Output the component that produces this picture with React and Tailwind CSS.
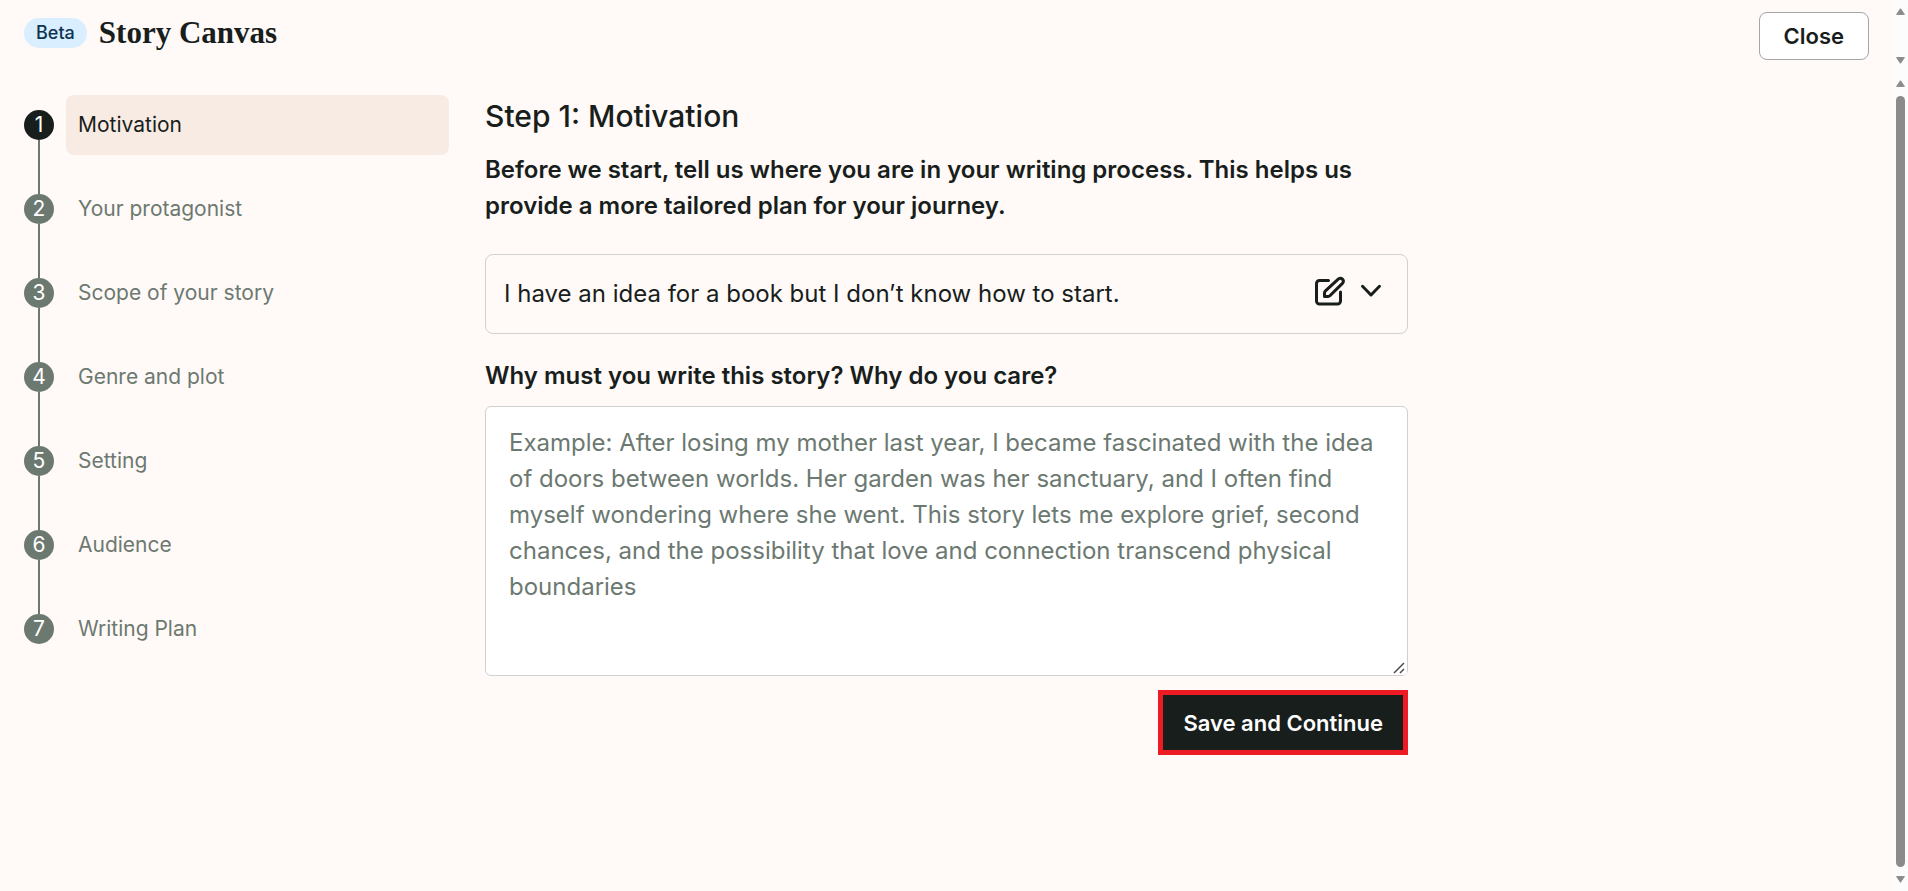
import { useState } from "react"

const STEPS = [
  "Motivation",
  "Your protagonist",
  "Scope of your story",
  "Genre and plot",
  "Setting",
  "Audience",
  "Writing Plan",
]

const STAGES = [
  "I have an idea for a book but I don’t know how to start.",
]

const PLACEHOLDER =
  "Example: After losing my mother last year, I became fascinated with the idea of doors between worlds. Her garden was her sanctuary, and I often find myself wondering where she went. This story lets me explore grief, second chances, and the possibility that love and connection transcend physical boundaries"

function Arrow({ down }) {
  return (
    <svg viewBox="0 0 9 7" className={down ? "w-[9px] h-[7px] rotate-180" : "w-[9px] h-[7px]"} fill="#8b8b8b" stroke="#8b8b8b" strokeWidth="1" strokeLinejoin="round" aria-hidden="true">
      <path d="M4.5 0.7 8.4 6.4H0.6Z" />
    </svg>
  )
}

function ScrollTrack({ thumb }) {
  return (
    <div className="w-[15px] shrink-0 bg-[#fcfcfc] flex flex-col items-center justify-between gap-[9px] py-2" aria-hidden="true">
      <Arrow />
      {thumb && <div className="w-[9px] flex-1 rounded-full bg-[#8b8b8b]" />}
      <Arrow down />
    </div>
  )
}

function EditIcon() {
  return (
    <svg viewBox="0 0 34 34" className="size-[34px]" fill="none" stroke="#181e1c" strokeWidth="3" strokeLinecap="round" strokeLinejoin="round" aria-hidden="true">
      <path d="M15.5 7.5h-9a3 3 0 0 0-3 3V28a3 3 0 0 0 3 3h18a3 3 0 0 0 3-3v-9" />
      <path d="M25.5 5.9a3 3 0 0 1 4.2 4.2L16.9 22.8a2.5 2.5 0 0 1-1.8.7H11.5V20a2.5 2.5 0 0 1 .7-1.8z" />
    </svg>
  )
}

function ChevronIcon() {
  return (
    <svg viewBox="0 0 24 24" className="size-6" fill="none" stroke="#181e1c" strokeWidth="3" strokeLinecap="round" strokeLinejoin="round" aria-hidden="true">
      <path d="M3.5 8.3l8.500 8.700 8.500-8.700" />
    </svg>
  )
}

// Larger grip drawn over the browser's own resize corner
function ResizeGrip() {
  return (
    <svg viewBox="0 0 15 15" className="absolute right-px bottom-px size-[15px] pointer-events-none" aria-hidden="true">
      <path d="M0 0H15V11A4 4 0 0 1 11 15H0Z" fill="#fff" />
      <path d="M2 13 12 3M8 13 12 9" stroke="#4c4c4c" strokeWidth="1.5" fill="none" />
    </svg>
  )
}

export default function StoryCanvas() {
  const [current, setCurrent] = useState(0)
  const [stage, setStage]     = useState(STAGES[0])
  const [reason, setReason]   = useState("")

  return (
    <div className="min-h-screen flex flex-col bg-[#fff9f7] text-[#181e1c] font-['Inter',sans-serif]">

      {/* Top bar */}
      <div className="flex">
        <header className="flex-1 flex items-start justify-between px-6 py-3">
          <div className="flex items-center gap-3 h-[42px]">
            <span className="bg-[#d9eefe] text-[#0c3450] text-lg leading-[30px] font-medium rounded-full px-3">Beta</span>
            <h1 className="font-['Liberation_Serif',serif] font-bold text-[31px] leading-10">Story Canvas</h1>
          </div>
          <button className="bg-white border border-[#a3a6a5] rounded-lg h-12 px-6 text-[22px] font-semibold">Close</button>
        </header>
        <ScrollTrack />
      </div>

      <div className="flex-1 flex">
        <div className="flex-1 flex gap-9 px-6 pt-[23px]">

          {/* Steps */}
          <nav className="w-[425px] shrink-0">
            <ol className="flex flex-col gap-6">
              {STEPS.map((step, i) => (
                <li key={step} className="relative">
                  {i < STEPS.length - 1 && <span className="absolute left-[14px] top-[45px] h-[54px] w-0.5 bg-[#6c7971]" />}
                  <button onClick={() => setCurrent(i)} className="w-full flex items-center gap-3 text-left text-[21px]">
                    <span className={`size-[30px] shrink-0 rounded-full text-white flex items-center justify-center ${i === current ? "bg-[#181e1c]" : "bg-[#6c7971]"}`}>
                      {i + 1}
                    </span>
                    <span className={`flex-1 h-[60px] flex items-center px-3 rounded-lg ${i === current ? "bg-[#f8ebe3]" : "text-[#6c7971]"}`}>
                      {step}
                    </span>
                  </button>
                </li>
              ))}
            </ol>
          </nav>

          {/* Current step */}
          <main className="flex-1 max-w-[923px] text-2xl leading-9">
            <h2 className="text-[30px] leading-[43px] font-medium">Step 1: Motivation</h2>
            <label htmlFor="stage" className="block mt-[14px] font-semibold">
              Before we start, tell us where you are in your writing process. This helps us provide a more tailored plan for your journey.
            </label>
            <div className="relative mt-[30px]">
              <select
                id="stage"
                value={stage}
                onChange={e => setStage(e.target.value)}
                className="block w-full h-20 appearance-none bg-transparent border border-[#cfd2d1] rounded-lg pl-[18px] pr-28"
              >
                {STAGES.map(s => <option key={s} value={s}>{s}</option>)}
              </select>
              <div className="absolute inset-y-0 right-[25px] pb-2 flex items-center gap-3 pointer-events-none">
                <EditIcon />
                <ChevronIcon />
              </div>
            </div>

            <label htmlFor="reason" className="block mt-6 font-semibold">Why must you write this story? Why do you care?</label>
            <div className="relative mt-3">
              <textarea
                id="reason"
                value={reason}
                onChange={e => setReason(e.target.value)}
                placeholder={PLACEHOLDER}
                className="block w-full h-[270px] px-[23px] py-[18px] bg-white border border-[#cfd2d1] rounded-md placeholder:text-[#6c7971]"
              />
              <ResizeGrip />
            </div>
            <div className="flex justify-end mt-[14px]">
              <button className="bg-[#181e1c] text-white border-5 border-[#ed1c24] h-[65px] px-5 text-[22px] font-semibold">Save and Continue</button>
            </div>
          </main>

        </div>
        <ScrollTrack thumb />
      </div>
    </div>
  )
}
